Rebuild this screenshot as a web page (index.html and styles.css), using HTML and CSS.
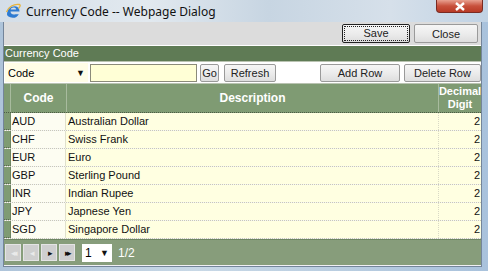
FILE: index.html
```html
<!DOCTYPE html>
<html lang="en">
<head>
    <meta charset="UTF-8">
    <title>Currency Code -- Webpage Dialog</title>
    <link rel="stylesheet" href="styles.css">
</head>
<body>
    <div class="window">
        <!-- Title bar -->
        <div class="titlebar">
            <svg class="ie-icon" width="16" height="16" viewBox="0 0 16 16">
                <path d="M2 11.5 C2 6 6 3 10 3.2 C13 3.4 14.5 5.5 14.5 8.5 L5.5 8.5 C5.7 11 8 12.2 10.5 11.2 L13.8 11.2 C12.5 13.8 10 15 7.8 14.8 C4 14.5 2 12.5 2 11.5 Z M5.6 6.6 L11.2 6.6 C11 5 9.8 4.6 8.5 4.6 C7 4.6 5.9 5.5 5.6 6.6 Z" fill="#2f7bd1" fill-rule="evenodd"/>
                <path d="M1.5 9 C3 4 9 0.5 14.5 1.5 C15.8 2 15 4 13.5 5.5" fill="none" stroke="#e9b43a" stroke-width="1.3"/>
            </svg>
            <span class="title">Currency Code -- Webpage Dialog</span>
            <div class="close-x">
                <svg width="12" height="9" viewBox="0 0 12 9">
                    <path d="M2 1 L10 8 M10 1 L2 8" stroke="#fff" stroke-width="2.4"/>
                </svg>
            </div>
        </div>

        <!-- Dialog client area -->
        <div class="client">
            <div class="toolbar">
                <button class="btn btn-focus"><span>Save</span></button>
                <button class="btn btn-close">Close</button>
            </div>

            <div class="panel-title">Currency Code</div>

            <div class="filter">
                <div class="select-code">
                    <span>Code</span>
                    <span class="arrow">&#9660;</span>
                </div>
                <div class="search-box"></div>
                <button class="btn btn-small btn-go">Go</button>
                <button class="btn btn-small btn-refresh">Refresh</button>
                <button class="btn btn-small btn-add">Add Row</button>
                <button class="btn btn-small btn-delete">Delete Row</button>
            </div>

            <div class="grid">
                <div class="grid-head">
                    <div class="sel"></div>
                    <div class="col-code">Code</div>
                    <div class="col-desc">Description</div>
                    <div class="col-dec">Decimal Digit</div>
                </div>
                <div class="grid-body">
                    <div class="grid-row"><div class="sel"></div><div class="col-code">AUD</div><div class="col-desc">Australian Dollar</div><div class="col-dec">2</div></div>
                    <div class="grid-row"><div class="sel"></div><div class="col-code">CHF</div><div class="col-desc">Swiss Frank</div><div class="col-dec">2</div></div>
                    <div class="grid-row"><div class="sel"></div><div class="col-code">EUR</div><div class="col-desc">Euro</div><div class="col-dec">2</div></div>
                    <div class="grid-row"><div class="sel"></div><div class="col-code">GBP</div><div class="col-desc">Sterling Pound</div><div class="col-dec">2</div></div>
                    <div class="grid-row"><div class="sel"></div><div class="col-code">INR</div><div class="col-desc">Indian Rupee</div><div class="col-dec">2</div></div>
                    <div class="grid-row"><div class="sel"></div><div class="col-code">JPY</div><div class="col-desc">Japnese Yen</div><div class="col-dec">2</div></div>
                    <div class="grid-row"><div class="sel"></div><div class="col-code">SGD</div><div class="col-desc">Singapore Dollar</div><div class="col-dec">2</div></div>
                </div>
            </div>

            <!-- Pager -->
            <div class="pager">
                <div class="pg-btn off">&#9666;&#9666;</div>
                <div class="pg-btn off">&#9666;</div>
                <div class="pg-btn">&#9656;</div>
                <div class="pg-btn">&#9656;&#9656;</div>
                <div class="pg-select"><span>1</span><span class="arrow">&#9660;</span></div>
                <span class="pg-count">1/2</span>
            </div>
            <div class="status"></div>
        </div>
    </div>
</body>
</html>
```

FILE: styles.css
```css
/* Dialog window */
body {
    margin: 0;
    padding: 0;
    font-family: "Liberation Sans", Arial, sans-serif;
    font-size: 11px;
    background-color: #b5cbe2;
}
.window {
    width: 488px;
    height: 271px;
    display: flex;
    flex-direction: column;
    background: linear-gradient(to right, #aec4da, #c8d8e6 40%, #b9cde0 70%, #a9c2dc);
    overflow: hidden;
}
.titlebar {
    height: 22px;
    display: flex;
    align-items: center;
    position: relative;
    background: linear-gradient(to right, #d4dee8, #e2e9ef 30%, #c7d5e2 55%, #d6e0ea 80%, #c0d2e4);
}
.ie-icon {
    margin-left: 5px;
    margin-right: 5px;
}
.title {
    font-family: "Noto Sans", "Open Sans", sans-serif;
    font-size: 12px;
    color: #111;
}
.close-x {
    position: absolute;
    top: 0;
    right: 5px;
    width: 45px;
    height: 12px;
    border: 1px solid #7a2a22;
    border-top: none;
    border-radius: 0 0 4px 4px;
    background: linear-gradient(#e8a090, #c8503c 50%, #b83a26);
    display: flex;
    align-items: center;
    justify-content: center;
}
.client {
    flex-grow: 1;
    margin: 0 6px 4px 3px;
    display: flex;
    flex-direction: column;
    background-color: #f3f3f6;
    border: 1px solid #74859a;
    border-top: none;
}
.toolbar {
    height: 23px;
    display: flex;
    align-items: center;
    justify-content: flex-end;
    gap: 4px;
    padding-right: 3px;
    background-color: #dcdcdc;
    border-bottom: 1px solid #fff;
}
.btn {
    font-family: "Liberation Sans", Arial, sans-serif;
    font-size: 11px;
    color: #222;
    background: linear-gradient(#f6f6f6, #ececec 50%, #dedede);
    border: 1px solid #9a9a9a;
    border-radius: 2px;
    padding: 0;
    height: 19px;
}
.btn-focus {
    width: 68px;
    border: 1px solid #222;
    padding: 1px;
}
.btn-focus span {
    display: block;
    height: 13px;
    line-height: 13px;
    border: 1px dotted #222;
}
.btn-close {
    width: 64px;
}
.panel-title {
    height: 15px;
    line-height: 15px;
    padding-left: 1px;
    color: #fff;
    background-color: #5f7b55;
}
.filter {
    height: 21px;
    display: flex;
    align-items: center;
    background-color: #fff;
    border-top: 1px solid #b9c3b1;
    border-bottom: 1px solid #b9c3b1;
}
.select-code {
    width: 77px;
    height: 19px;
    margin-left: 1px;
    padding: 0 3px;
    display: flex;
    align-items: center;
    justify-content: space-between;
    background-color: #fffde6;
    font-size: 11px;
}
.arrow {
    font-size: 9px;
    color: #111;
}
.search-box {
    width: 105px;
    height: 16px;
    margin-left: 2px;
    background-color: #ffffd6;
    border: 1px solid #8b8b7a;
}
.btn-small {
    height: 18px;
}
.btn-go {
    width: 19px;
    margin-left: 3px;
}
.btn-refresh {
    width: 52px;
    margin-left: 5px;
}
.btn-add {
    width: 80px;
    margin-left: auto;
}
.btn-delete {
    width: 77px;
    margin-left: 4px;
}

/* Grid */
.grid-head {
    height: 28px;
    display: flex;
    background-color: #7f9b73;
    color: #fff;
    font-weight: bold;
    border-bottom: 1px dotted #4c5c44;
}
.grid-head > div {
    display: flex;
    align-items: center;
    justify-content: center;
    text-align: center;
    line-height: 13px;
    border-right: 1px solid #a8bb9e;
}
.grid-head .col-code,
.grid-head .col-desc {
    font-size: 12px;
}
.sel {
    width: 6px;
    flex-shrink: 0;
    background-color: #7f9b73;
}
.col-code {
    width: 55px;
    flex-shrink: 0;
}
.col-desc {
    flex-grow: 1;
}
.col-dec {
    width: 42px;
    flex-shrink: 0;
}
.grid-head .col-dec {
    border-right: none;
}
.grid-row {
    height: 18px;
    display: flex;
    border-bottom: 1px dotted #c9c9b6;
    box-sizing: border-box;
}
.grid-row > div {
    line-height: 17px;
    color: #111;
}
.grid-row .sel {
    border-bottom: 1px dotted #5a6a50;
    border-right: 1px solid #6d8562;
}
.grid-row .col-code {
    padding-left: 1px;
    box-sizing: border-box;
    background-color: #fdfdf2;
    border-right: 1px solid #e0e0cc;
}
.grid-row .col-desc {
    padding-left: 2px;
    background-color: #ffffe1;
    border-right: 1px dotted #d9d9c6;
}
.grid-row .col-dec {
    text-align: right;
    padding-right: 1px;
    box-sizing: border-box;
    background-color: #ffffe1;
}
.grid-body {
    border-bottom: 1px solid #6d8562;
}

/* Pager */
.pager {
    height: 25px;
    display: flex;
    align-items: center;
    gap: 2px;
    padding-left: 1px;
    background-color: #879d7b;
}
.pg-btn {
    width: 14px;
    height: 15px;
    display: flex;
    align-items: center;
    justify-content: center;
    letter-spacing: -3px;
    font-size: 9px;
    color: #111;
    background-color: #cfcfcf;
    border: 1px solid #e4e4e4;
}
.pg-btn.off {
    color: #eaeaea;
}
.pg-select {
    width: 24px;
    height: 18px;
    margin-left: 5px;
    padding: 0 3px;
    display: flex;
    align-items: center;
    justify-content: space-between;
    background-color: #fff;
    font-size: 12px;
}
.pg-count {
    margin-left: 4px;
    color: #fff;
    font-size: 12px;
}
.status {
    flex-grow: 1;
    background-color: #f0f0f5;
}
```
